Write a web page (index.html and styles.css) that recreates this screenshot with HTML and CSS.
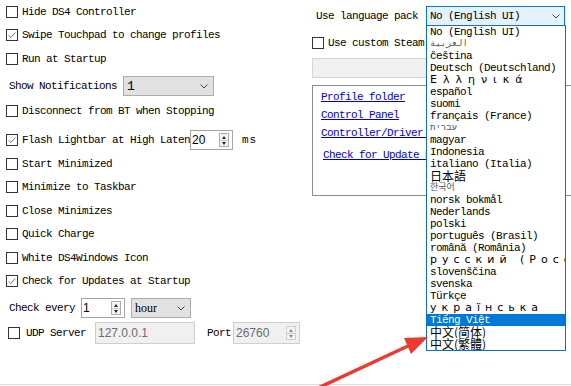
FILE: index.html
```html
<!DOCTYPE html>
<html lang="en">
<head>
    <meta charset="UTF-8">
    <title>DS4Windows Settings</title>
    <link rel="stylesheet" href="styles.css">
</head>
<body>
    <div class="window">
        <div class="main">
            <div class="col-left">
                <div class="row r-first"><span class="cb"></span><span class="lbl">Hide DS4 Controller</span></div>
                <div class="row"><span class="cb checked"><svg viewBox="0 0 12 12"><path d="M2 6.2 L4.6 9 L10 3"/></svg></span><span class="lbl">Swipe Touchpad to change profiles</span></div>
                <div class="row"><span class="cb"></span><span class="lbl">Run at Startup</span></div>
                <div class="row mt3 pad-label">
                    <span class="lbl w-notif">Show Notifications</span>
                    <div class="combo combo-notif"><span>1</span><svg class="chev" viewBox="0 0 8 5"><path d="M0.5 0.5 L4 4 L7.5 0.5"/></svg></div>
                </div>
                <div class="row mt1"><span class="cb"></span><span class="lbl">Disconnect from BT when Stopping</span></div>
                <div class="row mt5">
                    <span class="cb checked"><svg viewBox="0 0 12 12"><path d="M2 6.2 L4.6 9 L10 3"/></svg></span>
                    <span class="lbl w-flash">Flash Lightbar at High Latency</span>
                    <div class="num num-flash"><span class="num-val">20</span><div class="spin"><span class="up"></span><span class="down"></span></div></div>
                    <span class="lbl ms">ms</span>
                </div>
                <div class="row short"><span class="cb"></span><span class="lbl">Start Minimized</span></div>
                <div class="row short"><span class="cb"></span><span class="lbl">Minimize to Taskbar</span></div>
                <div class="row short"><span class="cb"></span><span class="lbl">Close Minimizes</span></div>
                <div class="row short"><span class="cb"></span><span class="lbl">Quick Charge</span></div>
                <div class="row short"><span class="cb"></span><span class="lbl">White DS4Windows Icon</span></div>
                <div class="row short"><span class="cb checked"><svg viewBox="0 0 12 12"><path d="M2 6.2 L4.6 9 L10 3"/></svg></span><span class="lbl">Check for Updates at Startup</span></div>
                <div class="row mt3 pad-label">
                    <span class="lbl w-every">Check every</span>
                    <div class="num num-every"><span class="num-val serif">1</span><div class="spin"><span class="up"></span><span class="down"></span></div></div>
                    <div class="combo combo-hour"><span class="serif">hour</span><svg class="chev" viewBox="0 0 8 5"><path d="M0.5 0.5 L4 4 L7.5 0.5"/></svg></div>
                </div>
                <div class="row mt1 pad-udp">
                    <span class="cb"></span>
                    <span class="lbl w-udp">UDP Server</span>
                    <div class="field field-ip">127.0.0.1</div>
                    <span class="lbl port">Port</span>
                    <div class="field field-port"><span>26760</span><div class="spin spin-off"><span class="up"></span><span class="down"></span></div></div>
                </div>
            </div>

            <div class="col-right">
                <div class="lang-row">
                    <span class="lbl w-lang">Use language pack</span>
                    <div class="lang-select">
                        <span>No (English UI)</span>
                        <svg class="chev" viewBox="0 0 8 5"><path d="M0.5 0.5 L4 4 L7.5 0.5"/></svg>
                        <ul class="lang-list">
                            <li>No (English UI)</li>
                            <li class="tiny">العربية</li>
                            <li>čeština</li>
                            <li>Deutsch (Deutschland)</li>
                            <li class="wide greek">Ελληνικά</li>
                            <li>español</li>
                            <li>suomi</li>
                            <li>français (France)</li>
                            <li class="tiny">עברית</li>
                            <li>magyar</li>
                            <li>Indonesia</li>
                            <li>italiano (Italia)</li>
                            <li class="cjk">日本語</li>
                            <li class="tiny">한국어</li>
                            <li>norsk bokmål</li>
                            <li>Nederlands</li>
                            <li>polski</li>
                            <li>português (Brasil)</li>
                            <li>română (România)</li>
                            <li class="wide">русский (Россия)</li>
                            <li>slovenščina</li>
                            <li>svenska</li>
                            <li>Türkçe</li>
                            <li class="wide">українська</li>
                            <li class="selected">Tiếng Việt</li>
                            <li class="cjk">中文(简体)</li>
                            <li class="cjk">中文(繁體)</li>
                        </ul>
                    </div>
                </div>
                <div class="row steam-row"><span class="cb"></span><span class="lbl">Use custom Steam Folder</span></div>
                <div class="field steam-path"></div>
                <div class="group">
                    <a class="link" href="#">Profile folder</a>
                    <a class="link" href="#">Control Panel</a>
                    <a class="link" href="#">Controller/Driver Setup</a>
                    <a class="link link-update" href="#">Check for Update Now</a>
                </div>
            </div>
        </div>

        <svg class="arrow" viewBox="0 0 571 386">
            <path d="M318 388 L408 346" stroke="#ec3a30" stroke-width="3.5" fill="none"/>
            <polygon points="428,337 411,354 404,338" fill="#ec3a30"/>
        </svg>
    </div>
</body>
</html>
```

FILE: styles.css
```css
body {
    margin: 0;
    background-color: #fff;
    color: #000;
    font-family: "Liberation Mono", "Noto Sans CJK SC", monospace;
    font-size: 11px;
    letter-spacing: -0.6px;
}
.window {
    position: relative;
    width: 571px;
    height: 386px;
    overflow: hidden;
}
.main {
    display: flex;
    height: 384px;
    border-bottom: 1px solid #dcdcdc;
}
.col-left {
    width: 300px;
    padding-left: 6px;
    flex-shrink: 0;
}
.row {
    display: flex;
    align-items: center;
    height: 24px;
    white-space: nowrap;
}
.r-first { height: 23px; }
.short { height: 23.5px; }
.mt1 { margin-top: 1px; }
.mt3 { margin-top: 3px; }
.mt5 { margin-top: 5px; }
.pad-label { padding-left: 3px; }
.pad-udp { padding-left: 2px; }

.cb {
    width: 12px;
    height: 12px;
    border: 1px solid #333;
    box-sizing: border-box;
    background: #fff;
    margin-right: 4px;
    flex-shrink: 0;
    display: flex;
}
.cb svg {
    width: 10px;
    height: 10px;
    fill: none;
    stroke: #666;
    stroke-width: 1.1;
}
.lbl { display: inline-block; }
.w-notif { width: 114px; }
.w-flash { width: 168px; overflow: hidden; }
.w-every { width: 72px; }
.w-udp { width: 69px; margin-left: 2px; }
.ms { margin-left: 9px; letter-spacing: 1px; }
.port { margin-left: 12px; width: 26px; }

.combo {
    display: flex;
    align-items: center;
    justify-content: space-between;
    height: 20px;
    box-sizing: border-box;
    border: 1px solid #adadad;
    background: #e1e1e1;
    padding: 0 5px 0 3px;
}
.combo-notif { width: 91px; font-size: 13px; }
.combo-hour { width: 60px; margin-left: 6px; }
.chev {
    width: 8px;
    height: 5px;
    fill: none;
    stroke: #444;
    stroke-width: 1;
}
.serif {
    font-family: "Liberation Serif", serif;
    font-size: 12px;
    letter-spacing: 0;
}

.num {
    display: flex;
    align-items: center;
    justify-content: space-between;
    height: 20px;
    box-sizing: border-box;
    border: 1px solid #a5a5a5;
    background: #fff;
    padding: 0 3px 0 1px;
}
.num-flash { width: 43px; }
.num-every { width: 44px; }
.num-val {
    font-family: "Liberation Sans", sans-serif;
    font-size: 12px;
    letter-spacing: 0;
}
.spin {
    display: flex;
    flex-direction: column;
    width: 10px;
    height: 14px;
    border: 1px solid #adadad;
    box-sizing: border-box;
    background: #f4f4f4;
}
.spin span {
    flex: 1;
    position: relative;
}
.spin .up { border-bottom: 1px solid #c8c8c8; }
.spin span::after {
    content: "";
    position: absolute;
    left: 2px;
    top: 2px;
    border-left: 2.5px solid transparent;
    border-right: 2.5px solid transparent;
}
.spin .up::after { border-bottom: 3px solid #222; }
.spin .down::after { border-top: 3px solid #222; top: 1px; }
.spin-off { border-color: #d0d0d0; }
.spin-off .up::after { border-bottom-color: #888; }
.spin-off .down::after { border-top-color: #888; }

.field {
    display: flex;
    align-items: center;
    box-sizing: border-box;
    border: 1px solid #cfcfcf;
    background: #f0f0f0;
    color: #6d6d6d;
    font-family: "Liberation Sans", sans-serif;
    font-size: 12px;
    letter-spacing: 0;
    padding-left: 2px;
}
.field-ip { width: 100px; height: 22px; }
.field-port {
    width: 67px;
    height: 22px;
    justify-content: space-between;
    padding-right: 3px;
}

.col-right {
    flex: 1;
    padding-left: 6px;
}
.lang-row {
    display: flex;
    align-items: center;
    margin-top: 6px;
    height: 20px;
    padding-left: 4px;
    white-space: nowrap;
}
.w-lang { width: 110px; }
.lang-select {
    position: relative;
    display: flex;
    align-items: center;
    justify-content: space-between;
    width: 139px;
    height: 20px;
    box-sizing: border-box;
    border: 1px solid #0078d7;
    background: #e5f1fb;
    padding: 0 4px 0 3px;
}
.lang-list {
    position: absolute;
    top: 18px;
    left: -1px;
    z-index: 2;
    width: 140px;
    margin: 0;
    padding: 0;
    list-style: none;
    box-sizing: border-box;
    border: 1px solid #0b6fc4;
    background: #fff;
}
.lang-list li {
    height: 12px;
    line-height: 12px;
    padding-left: 3px;
    white-space: nowrap;
    overflow: hidden;
}
.lang-list .tiny {
    font-size: 9px;
    line-height: 12px;
    color: #555;
    letter-spacing: 0;
}
.lang-list .wide {
    letter-spacing: 5px;
    font-family: "DejaVu Sans", sans-serif;
    font-size: 11px;
}
.lang-list .greek { letter-spacing: 6px; }
.lang-list .cjk {
    font-family: "Noto Sans CJK SC", sans-serif;
    font-size: 12px;
    letter-spacing: 0;
    line-height: 12px;
}
.lang-list .selected {
    background: #0078d7;
    color: #fff;
}

.steam-row {
    margin-top: 5px;
    overflow: hidden;
}
.steam-path {
    margin-top: 3px;
    width: 250px;
    height: 20px;
    border-color: #d4d4d4;
    background: #f0f0f0;
}
.group {
    margin-top: 7px;
    width: 260px;
    height: 111px;
    box-sizing: border-box;
    border: 1px solid #8c8c8c;
    padding: 2px 0 0 8px;
    display: flex;
    flex-direction: column;
}
.link {
    display: block;
    height: 18px;
    line-height: 18px;
    color: #0000d0;
    text-decoration: underline;
    white-space: nowrap;
}
.link-update {
    margin-top: 4px;
    margin-left: 2px;
}

.arrow {
    position: absolute;
    left: 0;
    top: 0;
    width: 571px;
    height: 386px;
    z-index: 5;
    pointer-events: none;
}
```
